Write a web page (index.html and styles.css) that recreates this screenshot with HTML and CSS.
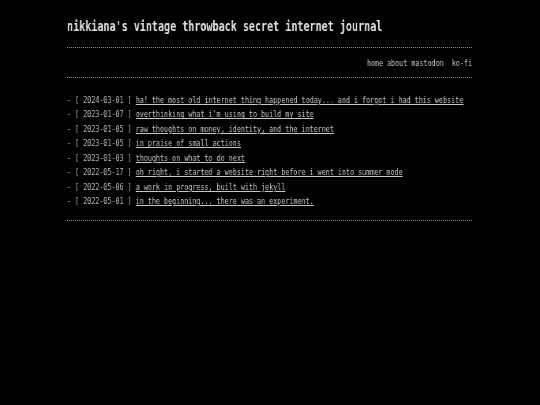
FILE: index.html
```html
<!DOCTYPE html>
<html>
<head>
<meta charset="utf-8">
<link rel="stylesheet" href="styles.css">
</head>
<body>
<div class="page">
  <h1 class="title">nikkiana's vintage throwback secret internet journal</h1>
  <hr class="rule rule-top">
  <nav class="nav"><a href="#">home</a> <a href="#">about</a> <a href="#">mastodon</a>&nbsp; <a href="#">ko-fi</a></nav>
  <hr class="rule rule-nav">
  <ul class="posts">
    <li>- [ 2024-03-01 ] <a href="#">ha! the most old internet thing happened today... and i forgot i had this website</a></li>
    <li>- [ 2023-01-07 ] <a href="#">overthinking what i'm using to build my site</a></li>
    <li>- [ 2023-01-05 ] <a href="#">raw thoughts on money, identity, and the internet</a></li>
    <li>- [ 2023-01-05 ] <a href="#">in praise of small actions</a></li>
    <li>- [ 2023-01-03 ] <a href="#">thoughts on what to do next</a></li>
    <li>- [ 2022-05-17 ] <a href="#">oh right, i started a website right before i went into summer mode</a></li>
    <li>- [ 2022-05-06 ] <a href="#">a work in progress, built with jekyll</a></li>
    <li>- [ 2022-05-01 ] <a href="#">in the beginning... there was an experiment.</a></li>
  </ul>
  <hr class="rule rule-bottom">
</div>
</body>
</html>
```

FILE: styles.css
```css
html, body {
  margin: 0;
  padding: 0;
  background: #000;
}

body {
  font-family: "DejaVu Sans Mono", "Liberation Mono", monospace;
  color: #bdbdbd;
}

.page {
  width: 405px;
  margin-left: 67px;
  filter: grayscale(1);
}

.title {
  margin: 0;
  padding-top: 16px;
  font-size: 13.5px;
  line-height: 20px;
  font-weight: bold;
  color: #e2e2e2;
  white-space: nowrap;
  transform: scaleX(0.746);
  transform-origin: 0 0;
  will-change: transform;
}

.rule {
  margin: 0;
  height: 0;
  border: 0;
  border-top: 1px dotted #8a8a8a;
}

.rule-top { margin-top: 11px; }

.nav {
  margin-top: 8px;
  font-size: 8.5px;
  line-height: 14px;
  text-align: right;
  white-space: nowrap;
  transform: scaleX(0.79);
  transform-origin: 100% 0;
  will-change: transform;
}

.nav a {
  color: #c8c8c8;
  text-decoration: none;
}

.rule-nav { margin-top: 7px; }

.posts {
  list-style: none;
  margin: 14.75px 0 0;
  padding: 0;
  font-size: 8.5px;
  line-height: 14.45px;
  white-space: nowrap;
  transform: scaleX(0.79);
  transform-origin: 0 0;
  will-change: transform;
}

.posts a {
  color: #c8c8c8;
  text-decoration: underline;
}

.rule-bottom { margin-top: 11.6px; }
```
